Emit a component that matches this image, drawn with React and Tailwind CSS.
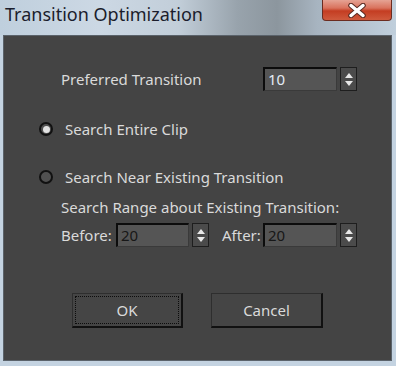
import React from "react";

const font = { fontFamily: '"Segoe UI", "Noto Sans", "Open Sans", sans-serif' };

function Spinner() {
  return (
    <div className="w-[17px] h-[24px] border border-[#1e1e1e] bg-[#4b4b4b] flex flex-col items-center justify-center gap-[3px]">
      <svg width="8" height="5" viewBox="0 0 8 5">
        <path d="M0 5 L4 0 L8 5 Z" fill="#e8e8e8" />
      </svg>
      <svg width="8" height="5" viewBox="0 0 8 5">
        <path d="M0 0 L4 5 L8 0 Z" fill="#e8e8e8" />
      </svg>
    </div>
  );
}

function NumBox({ children, width }) {
  return (
    <div
      className={`h-[24px] border-t-2 border-l-2 border-t-[#0c0c0c] border-l-[#0c0c0c] border-b border-r border-b-[#3a3a3a] border-r-[#3a3a3a] bg-[#555] flex items-center pl-[3px] text-[15px] ${width}`}
    >
      {children}
    </div>
  );
}

function Radio({ checked }) {
  return (
    <div className="w-[14px] h-[14px] rounded-full border-2 border-[#111] bg-[#505050] flex items-center justify-center">
      {checked && <div className="w-[7px] h-[7px] rounded-full bg-[#e2e2e2]" />}
    </div>
  );
}

export default function App() {
  return (
    <div
      className="w-[396px] h-[366px] flex flex-col bg-[#c4d3e1] overflow-hidden"
      style={font}
    >
      {/* title bar */}
      <div className="h-[35px] flex items-start justify-between bg-[linear-gradient(90deg,#bfcfdd_0%,#ccd8e4_25%,#c2ced9_45%,#98a3ac_60%,#8c969e_70%,#a7b4c0_80%,#c0cfdc_100%)]">
        <div className="pl-[5px] pt-[2px] text-[18px] text-[#1b1d2c] leading-[24px]">
          Transition Optimization
        </div>
        <div className="mr-[4px] w-[70px] h-[21px] rounded-b-[4px] border border-t-0 border-[#6b2c20] bg-[linear-gradient(180deg,#e5a394_0%,#d9725d_40%,#c43d22_55%,#cf5a3d_100%)] flex items-center justify-center">
          <svg width="20" height="15" viewBox="0 0 20 15">
            <path d="M4 2.5 L16 12.5 M16 2.5 L4 12.5" stroke="#5a2a22" strokeWidth="5.5" strokeLinecap="round" />
            <path d="M4 2.5 L16 12.5 M16 2.5 L4 12.5" stroke="#ffffff" strokeWidth="3.5" strokeLinecap="round" />
          </svg>
        </div>
      </div>

      {/* body */}
      <div className="flex-1 pl-[3px] pr-[4px] pb-[5px]">
        <div className="h-full border border-[#5b636b] bg-[#444444] text-[15px] text-[#dadada] flex flex-col">
          <div className="mt-[31px] h-[24px] flex items-center pl-[57px]">
            <div className="w-[202px]">Preferred Transition</div>
            <NumBox width="w-[74px]">
              <span className="text-[#e4ecf6]">10</span>
            </NumBox>
            <div className="ml-[3px]">
              <Spinner />
            </div>
          </div>

          <div className="mt-[30px] h-[16px] flex items-center pl-[35px]">
            <Radio checked />
            <span className="ml-[12px]">Search Entire Clip</span>
          </div>

          <div className="mt-[32px] h-[16px] flex items-center pl-[35px]">
            <Radio />
            <span className="ml-[12px]">Search Near Existing Transition</span>
          </div>

          <div className="mt-[14px] h-[16px] flex items-center pl-[57px]">
            Search Range about Existing Transition:
          </div>

          <div className="mt-[8px] h-[24px] flex items-center pl-[57px]">
            <div className="w-[55px]">Before:</div>
            <NumBox width="w-[73px]">
              <span className="text-neutral-900">20</span>
            </NumBox>
            <div className="ml-[3px]">
              <Spinner />
            </div>
            <div className="ml-[13px] w-[41px]">After:</div>
            <NumBox width="w-[74px]">
              <span className="text-neutral-900">20</span>
            </NumBox>
            <div className="ml-[3px]">
              <Spinner />
            </div>
          </div>

          <div className="mt-[46px] flex pl-[68px] gap-[28px]">
            <button className="w-[111px] h-[35px] border border-[#2e2e2e] border-b-2 border-r-2 border-b-[#111] border-r-[#111] bg-[#454545] flex items-center justify-center p-[2px]">
              <div className="w-full h-full border border-dotted border-[#0c0c0c] flex items-center justify-center text-[#dadada]">
                OK
              </div>
            </button>
            <button className="w-[112px] h-[35px] border border-[#2e2e2e] border-b-2 border-r-2 border-b-[#111] border-r-[#111] bg-[#454545] flex items-center justify-center text-[#dadada]">
              Cancel
            </button>
          </div>
        </div>
      </div>
    </div>
  );
}
